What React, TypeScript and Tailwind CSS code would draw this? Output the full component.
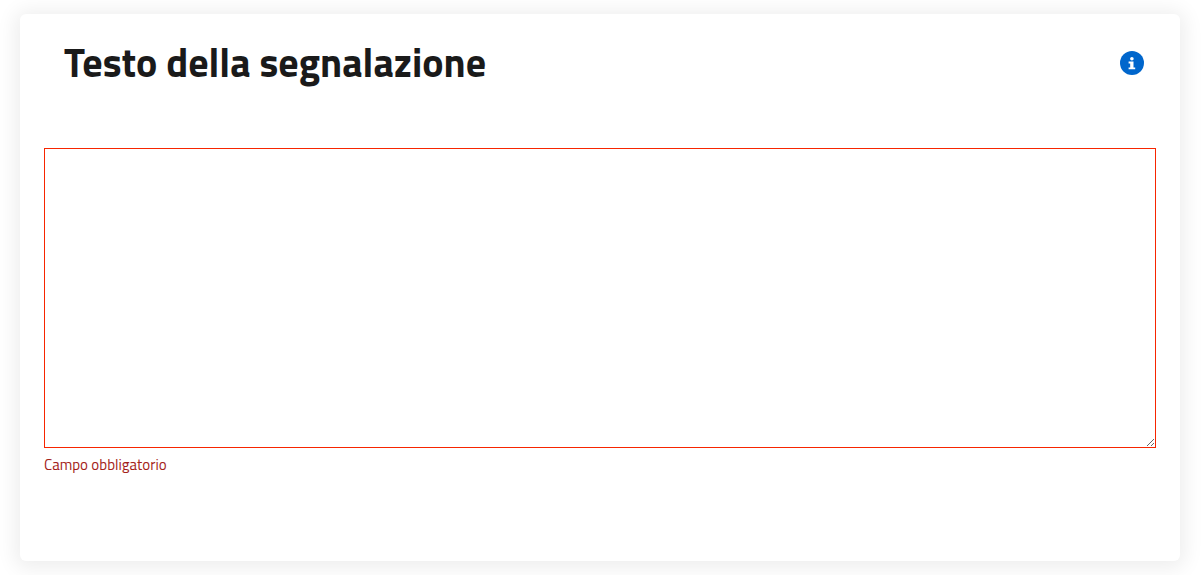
function InfoIcon() {
  return (
    <svg viewBox="0 0 24 24" aria-hidden="true" className="size-6">
      <circle cx="12" cy="12" r="12" fill="currentColor" />
      <circle cx="11.9" cy="7.7" r="1.8" fill="white" />
      <path d="M8.6 10.6H13.5V16.4H15.2V18.2H8.6V16.4H10.2V12.4H8.6Z" fill="white" />
    </svg>
  );
}

export default function App() {
  return (
    <main className="bg-white py-3.5 pr-[21px] pl-5 font-['Titillium_Web','Open_Sans',sans-serif] text-[#1a1a1a]">
      <section className="rounded-md bg-white px-6 pt-6 pb-[84px] shadow-[0_2px_20px_5px_rgba(0,0,0,0.07)]">
        <header className="flex items-center justify-between pr-3 pl-5">
          <h1 id="report-title" className="text-[40px] leading-[50px] font-bold">
            Testo della segnalazione
          </h1>
          <button type="button" aria-label="Informazioni" className="text-[#0066cc]">
            <InfoIcon />
          </button>
        </header>
        <div className="mt-[60px]">
          <textarea
            aria-labelledby="report-title"
            aria-describedby="report-error"
            aria-invalid="true"
            className="block h-[300px] w-full resize border border-[#f72500] bg-white p-2 outline-none"
          />
          <p id="report-error" className="mt-[5px] text-[15px] leading-6 text-[#a32219]">
            Campo obbligatorio
          </p>
        </div>
      </section>
    </main>
  );
}
